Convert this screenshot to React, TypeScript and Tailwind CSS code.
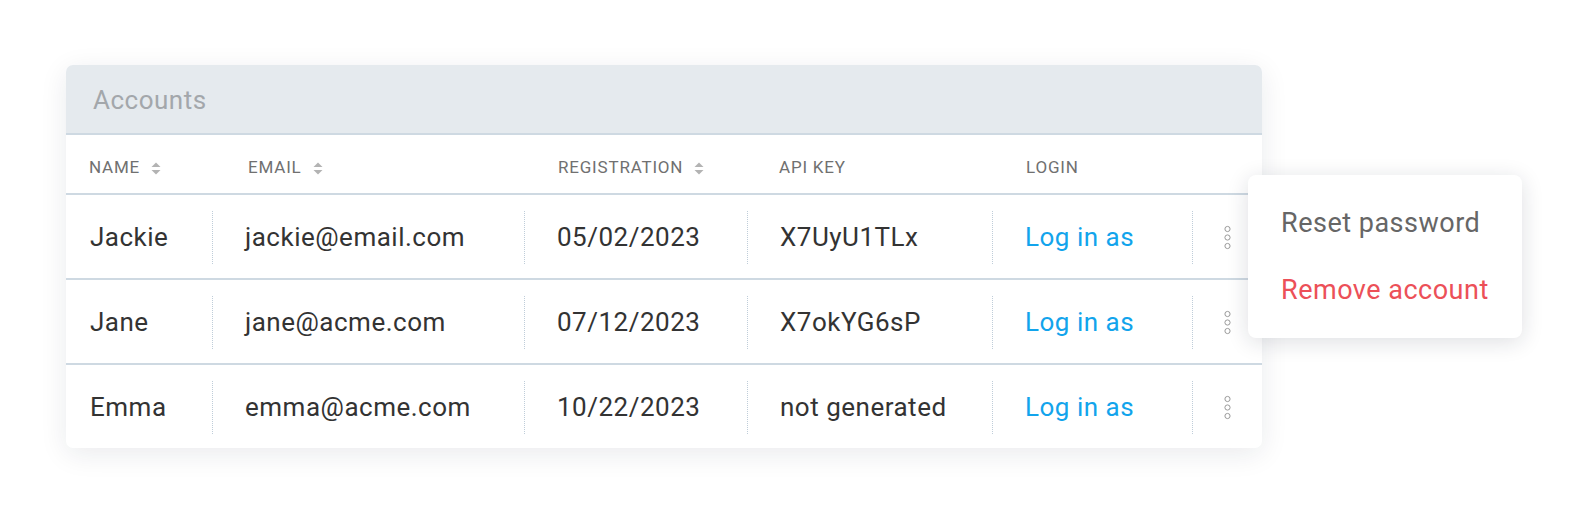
import React from 'react';

type Account = {
  name: string;
  email: string;
  registration: string;
  apiKey: string;
};

const accounts: Account[] = [
  { name: 'Jackie', email: 'jackie@email.com', registration: '05/02/2023', apiKey: 'X7UyU1TLx' },
  { name: 'Jane', email: 'jane@acme.com', registration: '07/12/2023', apiKey: 'X7okYG6sP' },
  { name: 'Emma', email: 'emma@acme.com', registration: '10/22/2023', apiKey: 'not generated' },
];

const cols = 'grid grid-cols-[146px_312px_223px_245px_200px_70px]';

function SortIcon() {
  return (
    <svg width="10" height="13" viewBox="0 0 10 13" className="ml-[11px]">
      <path d="M5 0.5 L9.5 5 L0.5 5 Z" fill="#b3b3b3" />
      <path d="M5 12.5 L9.5 8 L0.5 8 Z" fill="#b3b3b3" />
    </svg>
  );
}

function Kebab() {
  return (
    <svg width="9" height="25" viewBox="0 0 9 25">
      <circle cx="4.5" cy="4" r="2.6" fill="none" stroke="#9a9a9a" strokeWidth="1" />
      <circle cx="4.5" cy="12.5" r="2.6" fill="none" stroke="#9a9a9a" strokeWidth="1" />
      <circle cx="4.5" cy="21" r="2.6" fill="none" stroke="#9a9a9a" strokeWidth="1" />
    </svg>
  );
}

function Cell({ children, className = '' }: { children: React.ReactNode; className?: string }) {
  return (
    <div className="flex items-center">
      <div className="h-[53px] border-l border-dotted border-[#bfcdd9]" />
      <div className={`ml-[32px] ${className}`}>{children}</div>
    </div>
  );
}

export default function App() {
  return (
    <div
      className="relative min-h-[513px] w-[1586px] bg-white pl-[66px] pt-[65px]"
      style={{ fontFamily: 'Roboto, "Noto Sans", sans-serif' }}
    >
      {/* Table card */}
      <div className="w-[1196px] overflow-hidden rounded-[7px] bg-white shadow-[0_6px_28px_rgba(20,30,50,0.09)]">
        <div className="flex h-[68px] items-center bg-[#e5eaee] pl-[27px] pt-[2px] text-[26px] tracking-[0.5px] text-[#a3a7ab]">
          Accounts
        </div>
        <div className="h-[2px] bg-[#ced9e2]" />

        {/* Column headers */}
        <div className={`${cols} h-[58px] items-center pt-[8px] text-[17px] tracking-[0.8px] text-[#707070]`}>
          <div className="flex items-center pl-[23px]">
            NAME <SortIcon />
          </div>
          <div className="flex items-center pl-[36px]">
            EMAIL <SortIcon />
          </div>
          <div className="flex items-center pl-[34px]">
            REGISTRATION <SortIcon />
          </div>
          <div className="pl-[32px]">API KEY</div>
          <div className="pl-[34px]">LOGIN</div>
          <div />
        </div>
        <div className="h-[2px] bg-[#ced9e2]" />

        {/* Rows */}
        {accounts.map((a, i) => (
          <div key={a.name}>
            <div className={`${cols} h-[83px] pt-[2px] text-[26px] tracking-[0.5px] text-[#333333]`}>
              <div className="flex items-center pl-[24px]">{a.name}</div>
              <Cell>{a.email}</Cell>
              <Cell>{a.registration}</Cell>
              <Cell>{a.apiKey}</Cell>
              <Cell className="text-[#12a4ec]">Log in as</Cell>
              <div className="flex items-center">
                <div className="h-[53px] border-l border-dotted border-[#bfcdd9]" />
                <div className="ml-[30px] flex items-center">
                  <Kebab />
                </div>
              </div>
            </div>
            {i < accounts.length - 1 && <div className="h-[2px] bg-[#ced9e2]" />}
          </div>
        ))}
      </div>

      {/* Dropdown menu */}
      <div className="absolute left-[1248px] top-[175px] flex h-[163px] w-[274px] flex-col justify-center gap-[40px] rounded-[8px] bg-white pl-[33px] text-[27px] tracking-[0.5px] shadow-[0_4px_22px_rgba(20,30,50,0.14)]">
        <div className="leading-none text-[#666666]">Reset password</div>
        <div className="leading-none text-[#ec5058]">Remove account</div>
      </div>
    </div>
  );
}
